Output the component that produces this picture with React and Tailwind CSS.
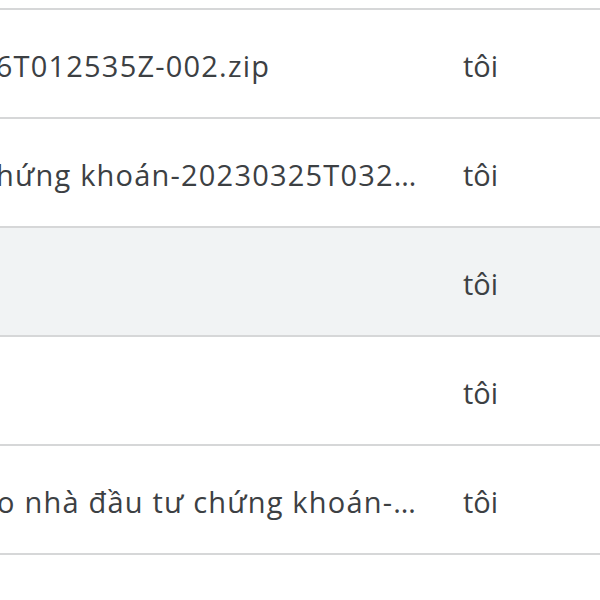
const rows = [
  { name: "26T012535Z-002.zip", shift: "-ml-[22px]", bg: "bg-white" },
  { name: "chứng khoán-20230325T032…", shift: "-ml-[19px]", bg: "bg-white" },
  { name: "", shift: "", bg: "bg-[#f1f3f4]" },
  { name: "", shift: "", bg: "bg-white" },
  { name: "cho nhà đầu tư chứng khoán-…", shift: "-ml-[37px]", bg: "bg-white" },
];

export default function App() {
  return (
    <div
      className="w-[600px] h-[600px] overflow-hidden bg-white pt-[8px] text-[#3c4043]"
      style={{ fontFamily: "'Open Sans', Roboto, sans-serif" }}
    >
      <div className="border-t-2 border-[#d6d7d8]">
        {rows.map((r, i) => (
          <div
            key={i}
            className={`flex items-center h-[109px] border-b-2 border-[#d6d7d8] ${r.bg}`}
          >
            <div className="w-[440px] overflow-hidden shrink-0 pt-[4px]">
              <div className={`${r.shift} whitespace-nowrap text-[29px] tracking-[1.2px] leading-[40px]`}>
                {r.name}
              </div>
            </div>
            <div className="pl-[23px] pt-[4px] text-[29px] leading-[40px]">tôi</div>
          </div>
        ))}
      </div>
    </div>
  );
}
